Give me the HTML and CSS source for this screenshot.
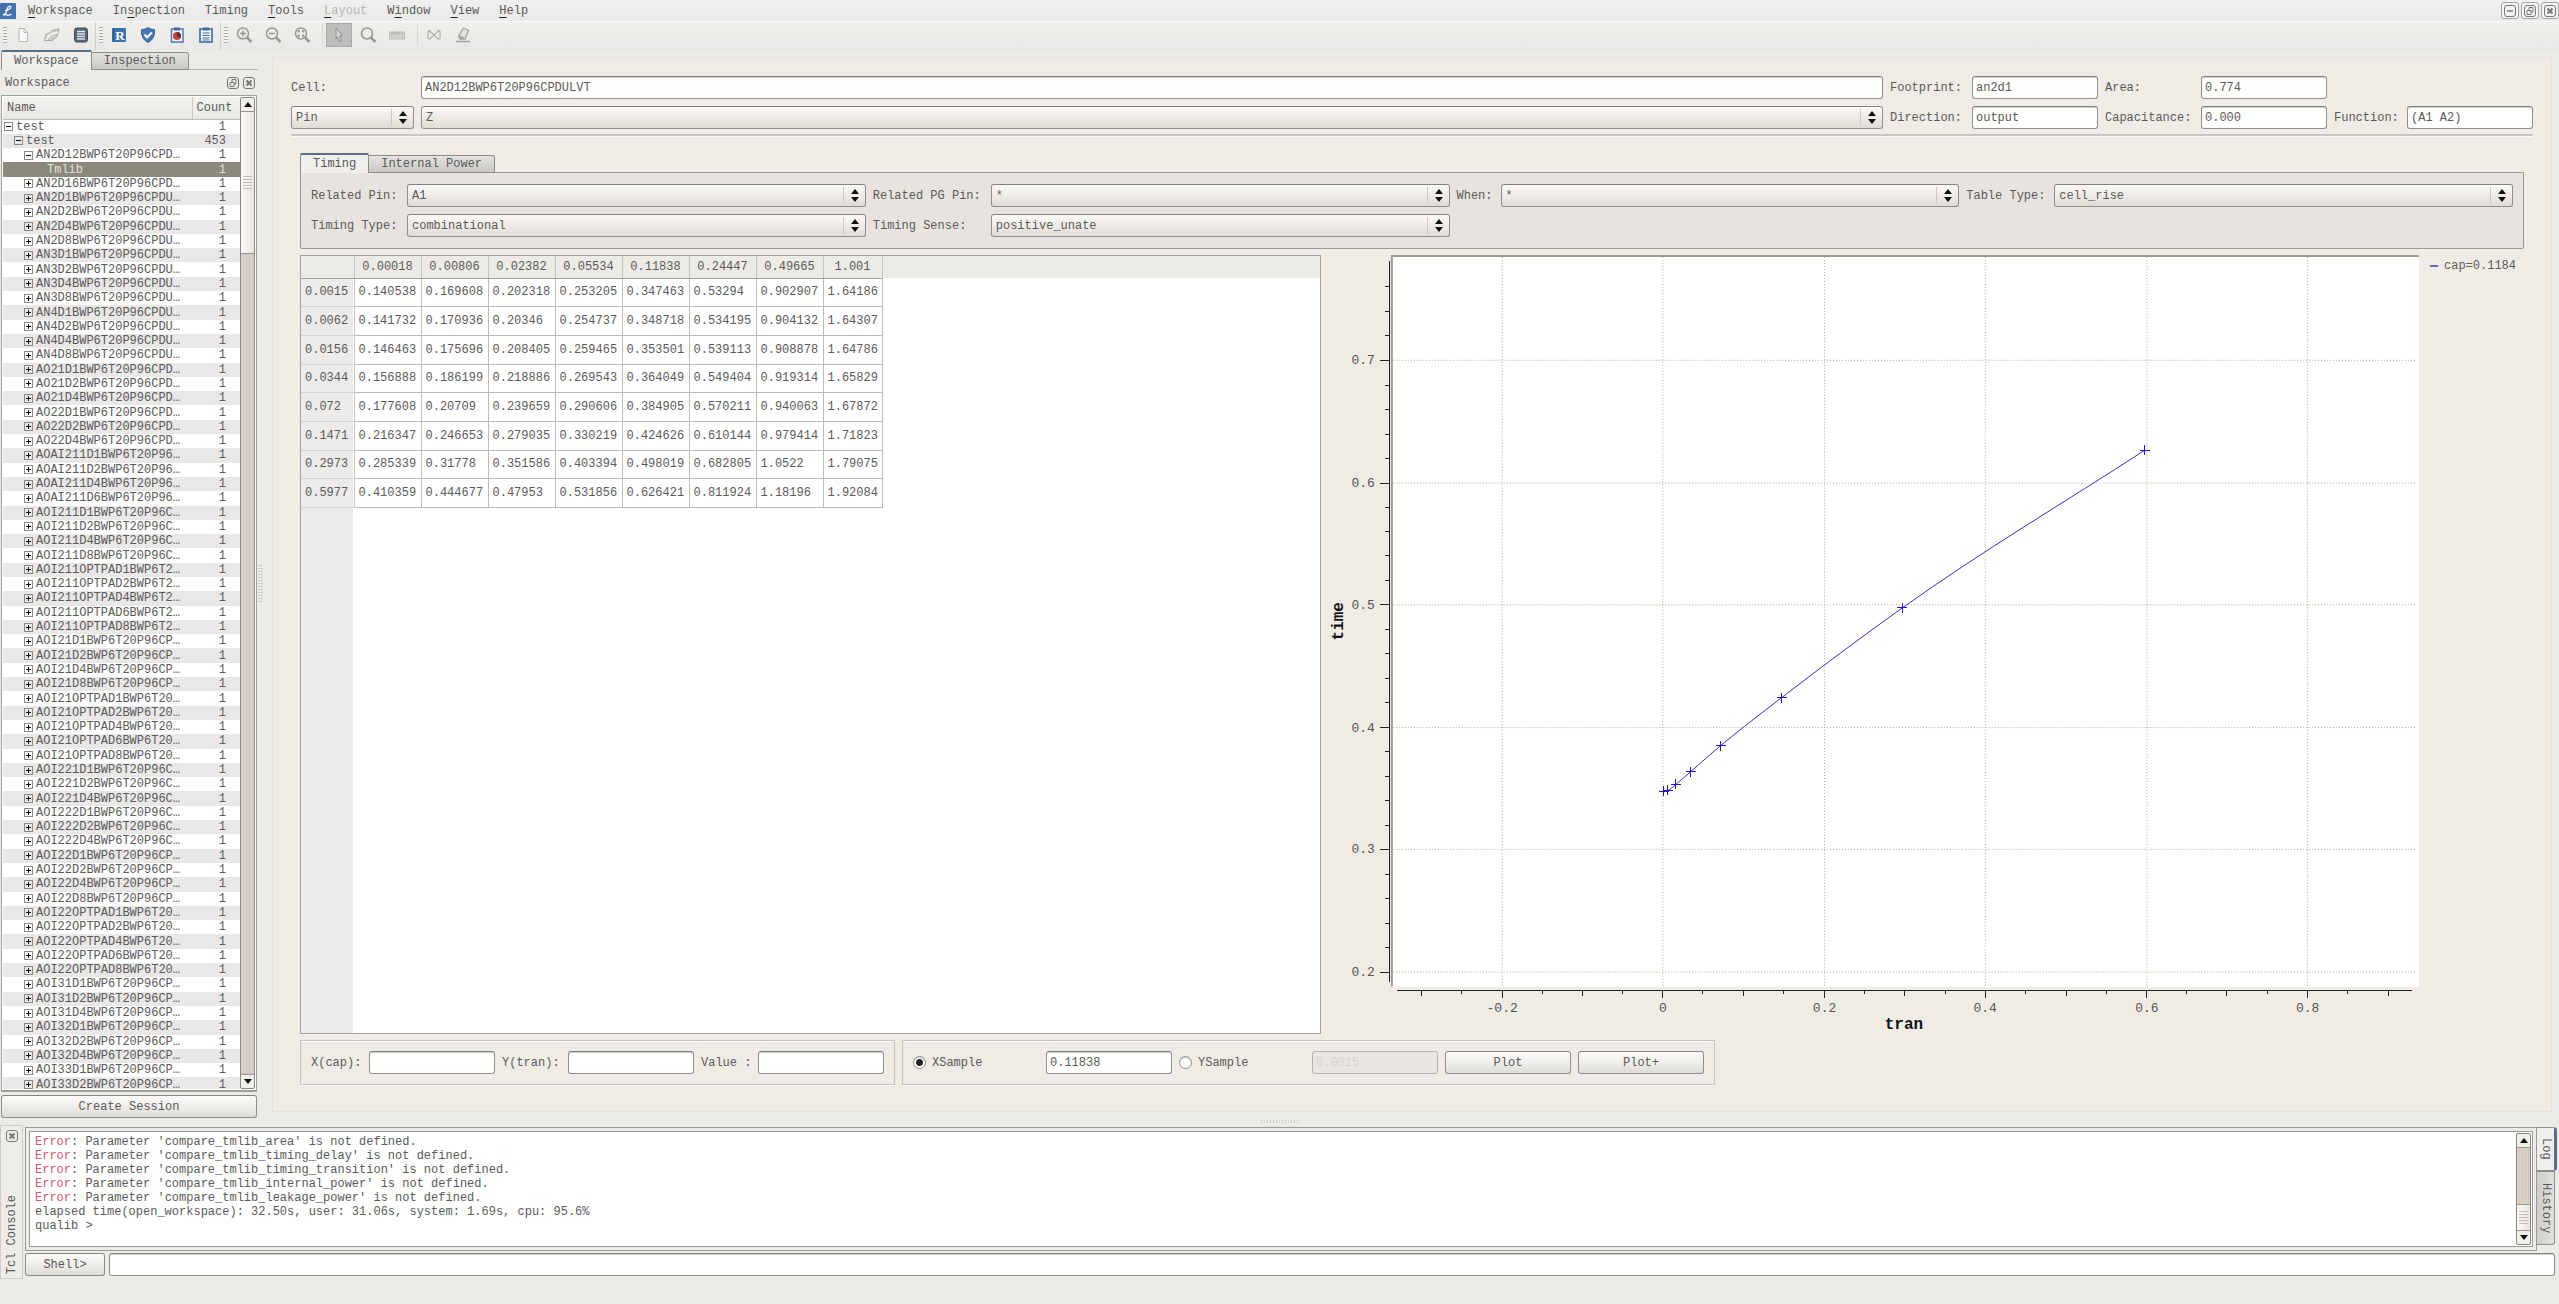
FILE: index.html
```html
<!DOCTYPE html>
<html lang="en">
<head>
<meta charset="utf-8">
<title>Workspace</title>
<link rel="stylesheet" href="styles.css">
</head>
<body>
<header class="menubar">
  <span class="logo"><svg width="16" height="16" viewBox="0 0 16 16"><rect width="16" height="16" rx="1" fill="#4273ae"/><path d="M11 4.500C11 2.500 8.500 2.500 7.500 5C6.700 7.500 6.500 10 4.500 12C3 12.500 3.500 10.500 5 11.200C7 12 8.500 13.500 11.500 11M5 7.500C7 7.500 9.500 6.500 11 4.500" fill="none" stroke="#fff" stroke-width="1.200"/></svg></span>
  <nav class="menus">
    <button><u>W</u>orkspace</button><button>In<u>s</u>pection</button><button>Timing</button><button><u>T</u>ools</button><button disabled><u>L</u>ayout</button><button>W<u>i</u>ndow</button><button><u>V</u>iew</button><button><u>H</u>elp</button>
  </nav>
  <div class="wincontrols">
    <button aria-label="Minimize"><svg width="12" height="12" viewBox="0 0 12 12"><rect x=".5" y=".5" width="11" height="11" rx="2.500"/><path d="M3 6h6" stroke-width="1.500"/></svg></button>
    <button aria-label="Restore"><svg width="12" height="12" viewBox="0 0 12 12"><rect x=".5" y=".5" width="11" height="11" rx="2.500"/><path d="M3 5.500h4v4h-4zM5 5.500v-3h4v4.500h-2"/></svg></button>
    <button aria-label="Close"><svg width="12" height="12" viewBox="0 0 12 12"><rect x=".5" y=".5" width="11" height="11" rx="2.500"/><path d="M3.500 3.500l5 5M8.500 3.500l-5 5" stroke-width="2"/></svg></button>
  </div>
</header>

<div class="toolbar">
  <div class="tools">
    <i class="grip"></i>
    <button aria-label="New"><svg viewBox="0 0 18 18"><path d="M5 2.500h5l3.500 4v9H5z" fill="#fbfbfa" stroke="#b4b3b0"/><path d="M10 2.500v4h3.500" fill="none" stroke="#b4b3b0"/></svg></button>
    <button aria-label="Open"><svg viewBox="0 0 18 18"><path d="M1.500 14.500L3 8l4-1 2-2.500 7-1.500-2 7.500-5 4z" fill="#cfcecb" stroke="#a5a4a1"/><path d="M3 14l4-5.500 8-2.500" fill="none" stroke="#f6f6f4" stroke-width="1.500"/></svg></button>
    <button aria-label="Database"><svg viewBox="0 0 18 18"><rect x="2.500" y="2" width="13" height="14" rx="2.500" fill="#5b6676" stroke="#3f4753"/><path d="M5 5.500h8M5 8h8M5 10.500h8M5 13h8" stroke="#dfe4ea" stroke-width="1.300"/></svg></button>
  </div>
  <div class="tools">
    <i class="grip"></i>
    <button aria-label="Report"><svg viewBox="0 0 18 18"><rect x="2" y="2" width="14" height="14" rx="1" fill="#3f72b0"/><path d="M3.500 2v14" stroke="#274e80"/><text x="10" y="14" text-anchor="middle" class="glyph">R</text></svg></button>
    <button aria-label="Check"><svg viewBox="0 0 18 18"><path d="M9 1.500c2 1.500 4 2 6.500 2 .5 6-1.500 10.500-6.500 13-5-2.500-7-7-6.500-13 2.500 0 4.500-.5 6.500-2z" fill="#4878b4" stroke="#365f94"/><path d="M5.500 8.500L8 11.500l5-5" fill="none" stroke="#fff" stroke-width="2"/></svg></button>
    <button aria-label="Chart"><svg viewBox="0 0 18 18"><rect x="3.500" y="3" width="11.500" height="13" fill="#f4f6fa" stroke="#4e79b0" stroke-width="1.500"/><rect x="6" y="1.500" width="6" height="3" fill="#3c6aa4"/><circle cx="9" cy="10" r="4" fill="#c34238"/><path d="M9 10V6a4 4 0 0 1 3.500 6z" fill="#5a3436"/></svg></button>
    <button aria-label="List"><svg viewBox="0 0 18 18"><rect x="3" y="3" width="12" height="13" fill="#f4f6fa" stroke="#3f72b0" stroke-width="1.700"/><rect x="6" y="1.500" width="6" height="3" fill="#3c6aa4"/><path d="M5.500 7h7M5.500 9.500h7M5.500 12h7M5.500 14h7" stroke="#4a6a94"/></svg></button>
  </div>
  <div class="tools">
    <i class="grip"></i>
    <button aria-label="Zoom in"><svg viewBox="0 0 18 18" class="lens"><circle cx="8" cy="7.500" r="5.500"/><path d="M12 11.500l4.500 4.500" stroke-width="2.500"/><path d="M5 7.500h6M8 4.500v6"/></svg></button>
    <button aria-label="Zoom out"><svg viewBox="0 0 18 18" class="lens"><circle cx="8" cy="7.500" r="5.500"/><path d="M12 11.500l4.500 4.500" stroke-width="2.500"/><path d="M5 7.500h6"/></svg></button>
    <button aria-label="Fit"><svg viewBox="0 0 18 18" class="lens"><circle cx="8" cy="7.500" r="5.500"/><path d="M12 11.500l4.500 4.500" stroke-width="2.500"/><path d="M5.500 6.500V5H7M9 5h1.500v1.500M10.500 8.500V10H9M7 10H5.500V8.500"/></svg></button>
    <i class="sep"></i>
    <button aria-label="Select" class="pressed"><svg viewBox="0 0 18 18"><path d="M6 2l6.500 8H9.500l2 5-2 .8-2-5L6 13z" fill="#d6d6d6" stroke="#8f8f8d"/></svg></button>
    <button aria-label="Search"><svg viewBox="0 0 18 18" class="lens"><circle cx="8" cy="7.500" r="5.500"/><path d="M12 11.500l4.500 4.500" stroke-width="2.500"/></svg></button>
    <button aria-label="Ruler"><svg viewBox="0 0 18 18"><rect x="1.500" y="6" width="15" height="7" fill="#cfcfcd" stroke="#bdbdba"/><path d="M4 6v3M6.500 6v2M9 6v3M11.500 6v2M14 6v3" stroke="#aaa"/></svg></button>
    <i class="sep"></i>
    <button aria-label="Measure"><svg viewBox="0 0 18 18" fill="none" stroke="#b0afac" stroke-width="1.200"><path d="M3 5v8M15 5v8M4 13.500L14 4.500M4 4.500L14 13.500"/><path d="M5.500 4.500H4V6M12.500 4.500H14V6"/></svg></button>
    <button aria-label="Clear"><svg viewBox="0 0 18 18"><path d="M6 13L4.500 10 9.500 2l5 2.500-3.500 8.500z" fill="#e4e3e1" stroke="#a3a29f" stroke-width="1.300"/><path d="M5 10l5.500 2.500M2 15.500h14" stroke="#a3a29f" stroke-width="1.500"/></svg></button>
  </div>
</div>

<main class="work">
  <aside class="dock">
    <div class="tabs"><button class="tab on">Workspace</button><button class="tab">Inspection</button></div>
    <div class="docktitle"><span>Workspace</span>
      <button class="mini" aria-label="Float"><svg width="12" height="12" viewBox="0 0 12 12"><rect x=".5" y=".5" width="11" height="11" rx="2.500"/><path d="M3 5.500h4v4h-4zM5 5.500v-3h4v4.500h-2"/></svg></button>
      <button class="mini" aria-label="Close"><svg width="12" height="12" viewBox="0 0 12 12"><rect x=".5" y=".5" width="11" height="11" rx="2.500"/><path d="M3.500 3.500l5 5M8.500 3.500l-5 5" stroke-width="2"/></svg></button>
    </div>
    <div class="treeframe">
      <div class="treeview">
        <table class="tree">
          <thead><tr><th>Name</th><th class="count">Count</th></tr></thead>
          <tbody id="cells"></tbody>
        </table>
      </div>
      <div class="scroll"><button class="up" aria-label="Up"></button><div class="thumb treethumb"></div><div class="trough"></div><button class="down" aria-label="Down"></button></div>
    </div>
    <button class="btn session">Create Session</button>
  </aside>
  <div class="vsplit"><i></i></div>

  <section class="panel">
    <div class="cellform">
      <label for="cell">Cell:</label>
      <input id="cell" value="AN2D12BWP6T20P96CPDULVT">
      <label for="foot">Footprint:</label><input id="foot" value="an2d1">
      <label for="area">Area:</label><input id="area" value="0.774">
      <span></span><span></span>
      <select aria-label="Object"><option>Pin</option></select>
      <select aria-label="Pin name"><option>Z</option></select>
      <label for="dir">Direction:</label><input id="dir" value="output">
      <label for="capac">Capacitance:</label><input id="capac" value="0.000">
      <label for="func">Function:</label><input id="func" value="(A1 A2)">
    </div>
    <hr>
    <div class="analysis">
      <div class="tabs"><button class="tab on">Timing</button><button class="tab">Internal Power</button></div>
      <div class="filters">
        <label for="rp">Related Pin:</label><select id="rp"><option>A1</option></select>
        <label for="pg">Related PG Pin:</label><select id="pg"><option>*</option></select>
        <label for="wh">When:</label><select id="wh"><option>*</option></select>
        <label for="tt">Table Type:</label><select id="tt"><option>cell_rise</option></select>
        <label for="ty">Timing Type:</label><select id="ty"><option>combinational</option></select>
        <label for="ts">Timing Sense:</label><select id="ts"><option>positive_unate</option></select>
      </div>
      <div class="views">
        <div class="sheet"><table class="lut"><thead><tr id="caps"></tr></thead><tbody id="values"></tbody></table></div>
        <div class="plot">
          <svg id="chart" viewBox="0 0 1100 780" preserveAspectRatio="xMinYMin meet" role="img" aria-label="time against tran"></svg>
          <div class="legend"><i></i>cap=0.1184</div>
        </div>
      </div>
      <div class="queries">
        <div class="group">
          <label for="xc">X(cap):</label><input id="xc">
          <label for="yt">Y(tran):</label><input id="yt">
          <label for="va">Value :</label><input id="va">
        </div>
        <div class="group">
          <label class="pick"><input type="radio" name="sample" checked>XSample</label><input aria-label="X sample value" value="0.11838">
          <label class="pick"><input type="radio" name="sample">YSample</label><input aria-label="Y sample value" value="0.0015" disabled>
          <button class="btn">Plot</button><button class="btn">Plot+</button>
        </div>
      </div>
    </div>
  </section>
</main>

<div class="hsplit"><i></i></div>

<footer class="console">
  <div class="side"><button class="mini" aria-label="Close"><svg width="12" height="12" viewBox="0 0 12 12"><rect x=".5" y=".5" width="11" height="11" rx="2.500"/><path d="M3.500 3.500l5 5M8.500 3.500l-5 5" stroke-width="2"/></svg></button><span>Tcl Console</span></div>
  <div class="shell">
    <div class="logrow">
      <div class="logframe"><div class="log">
<pre><b>Error</b>: Parameter 'compare_tmlib_area' is not defined.
<b>Error</b>: Parameter 'compare_tmlib_timing_delay' is not defined.
<b>Error</b>: Parameter 'compare_tmlib_timing_transition' is not defined.
<b>Error</b>: Parameter 'compare_tmlib_internal_power' is not defined.
<b>Error</b>: Parameter 'compare_tmlib_leakage_power' is not defined.
elapsed time(open_workspace): 32.50s, user: 31.06s, system: 1.69s, cpu: 95.6%
qualib &gt;</pre>
        <div class="scroll"><button class="up" aria-label="Up"></button><div class="trough"></div><div class="thumb logthumb"></div><button class="down" aria-label="Down"></button></div>
      </div></div>
      <div class="sidetabs"><button class="on">Log</button><button>History</button></div>
    </div>
    <div class="prompt"><button class="btn">Shell&gt;</button><input aria-label="Command"></div>
  </div>
</footer>
<script src="app.js"></script>
</body>
</html>
```
FILE: styles.css
```css
* { box-sizing: border-box; }
body, button, input, select, pre, table {
  font: 12px/14px "Liberation Mono", "Courier New", monospace;
  color: #5a5a5a;
}
body { margin: 0; height: 100vh; display: flex; flex-direction: column; background: #ecebe8; overflow: hidden; }
button { margin: 0; padding: 0; border: 0; background: none; }
svg { display: block; }

.menubar { display: flex; align-items: center; height: 22px; flex: none; background: linear-gradient(#f0f0ef, #e9e9e8); border-bottom: 1px solid #fafafa; }
.logo { width: 28px; }
.menus { display: flex; gap: 20px; flex: 1; }
.menus u { text-underline-offset: 3px; text-decoration-color: #222; }
.menus :disabled, .menus :disabled u { color: #b5b5b5; }
.wincontrols { display: flex; gap: 2px; }
.wincontrols button { width: 18px; height: 17px; border: 1px solid #a5a5a3; border-radius: 3px; display: grid; place-items: center; background: #f4f4f2; }
.wincontrols svg, .mini svg { fill: none; stroke: #777; }

.toolbar { display: flex; height: 28px; flex: none; background: linear-gradient(#f0efec, #e9e8e6); }
.tools { display: flex; align-items: center; gap: 3px; padding: 0 1px 2px 3px; border-right: 1px solid #d2d1ce; }
.tools:last-child { border: 0; }
.tools button { width: 26px; height: 24px; display: grid; place-items: center; }
.tools svg { width: 18px; height: 18px; }
.tools .pressed { background: #bdbdbb; border: 1px solid #aaa9a7; }
.grip { width: 4px; height: 16px; background: repeating-linear-gradient(#aaa9a6 0 1px, #f6f6f4 1px 3px); }
.sep { width: 1px; height: 22px; background: #d8d7d4; margin-left: 4px; }
.glyph { font: bold 13px "Liberation Serif", serif; fill: #fff; }
.lens { fill: none; stroke: #999894; stroke-width: 1.5; }

.work { flex: 1; min-height: 0; display: flex; }
.dock { width: 258px; padding-left: 1px; display: flex; flex-direction: column; }
.tabs { display: flex; align-items: flex-end; height: 20px; flex: none; position: relative; z-index: 1; margin-bottom: -1px; }
.tab { height: 18px; padding: 0 12px; border: 1px solid #8e8d8a; border-left-width: 0; border-radius: 0 3px 0 0; background: linear-gradient(#e4e3e0, #c9c8c4); }
.tab.on { height: 20px; border-left-width: 1px; border-top: 2px solid #5b6f85; border-bottom: 0; border-radius: 2px 2px 0 0; background: #f0efec; }
.docktitle { display: flex; align-items: center; gap: 4px; height: 26px; flex: none; padding: 0 3px 0 4px; border-top: 1px solid #b4b3b0; }
.docktitle span { flex: 1; }
.treeframe { flex: 1; min-height: 0; display: flex; border: 1px solid #a09f9c; border-width: 1px 1px 2px; padding: 1px; background: #fff; margin-right: 1px; }
.treeview { flex: 1; min-width: 0; height: 100%; overflow: hidden; }
.tree { width: 100%; height: calc(100% + 3px); border-collapse: collapse; table-layout: fixed; }
.tree th { height: 22px; padding: 0 0 0 4px; text-align: left; font-weight: normal; background: linear-gradient(#f3f2ef, #e9e8e5); border-bottom: 1px solid #bbbab7; }
.tree th.count { width: 48px; border-left: 1px solid #c9c8c5; }
.tree td { padding: 0; height: 14px; line-height: 14px; white-space: nowrap; }
.tree td + td { text-align: right; padding-right: 14px; }
.tree tr:nth-child(even) td { background: #e9e8e7; }
.tree tbody tr.sel td { background: #8a897b; color: #e2e1d8; }
.node { display: flex; align-items: center; gap: 3px; }
.l0 { padding-left: 1px; } .l1 { padding-left: 11px; } .l2 { padding-left: 21px; } .l3 { padding-left: 44px; }
.box { width: 9px; height: 9px; flex: none; border: 1px solid #8b8a87; background: linear-gradient(#111, #111) center / 5px 1px no-repeat; }
.box.plus { background: linear-gradient(#111, #111) center / 5px 1px no-repeat, linear-gradient(#111, #111) center / 1px 5px no-repeat; }
.session { margin: 3px 1px 0 0; flex: none; }

.scroll { width: 15px; flex: none; display: flex; flex-direction: column; border: 1px solid #8b8680; border-radius: 2px; background: #f1efea; }
.scroll button { height: 13px; flex: none; display: grid; place-items: center; }
.scroll button::before { content: ""; border: 4px solid transparent; }
.scroll .up::before { border-top: 0; border-bottom: 5px solid #111; }
.scroll .down::before { border-bottom: 0; border-top: 5px solid #111; }
.trough { flex: 1; background: repeating-linear-gradient(90deg, #d9d1c8 0 2px, #cfc6bd 2px 3px); border: 1px solid #9c958d; border-width: 1px 0; }
.thumb { flex: none; display: grid; place-items: center; background: linear-gradient(90deg, #fbfaf7, #e9e6df); border-top: 1px solid #9c958d; }
.thumb::before { content: ""; width: 9px; height: 13px; background: repeating-linear-gradient(#c4c0b8 0 1px, transparent 1px 3px); }
.treethumb { height: 142px; }
.logthumb { height: 26px; border-top: 0; border-bottom: 1px solid #9c958d; }

.vsplit { width: 14px; display: grid; place-items: center; padding-right: 9px; }
.vsplit i { width: 5px; height: 38px; background: repeating-linear-gradient(#cfcecb 0 1px, transparent 1px 3px); }
.hsplit { height: 7px; flex: none; display: grid; place-items: center; }
.hsplit i { width: 38px; height: 3px; background: repeating-linear-gradient(90deg, #cfcecb 0 1px, transparent 1px 3px); }

.panel { flex: 1; min-width: 0; margin: 7px 7px 6px 0; padding: 18px 18px 0 18px; border: 1px solid #e4e2dd; background: #efece6; display: flex; flex-direction: column; }
input, select, .btn { height: 23px; min-width: 0; border: 1px solid #8f8e8b; border-top-color: #848380; border-radius: 3px; }
input { width: 100%; padding: 0 3px; background: #fffffd; box-shadow: inset 0 1px #cfcecb; }
input:disabled { background: #e9e6e1; color: #d6d3ce; border-color: #b5b3af; box-shadow: none; }
select { width: 100%; padding: 0 22px 0 4px; appearance: none; background:
  url("data:image/svg+xml,%3Csvg xmlns='http://www.w3.org/2000/svg' width='22' height='21'%3E%3Cpath d='M.5 2v17' stroke='%23cccac5'/%3E%3Cpath d='M8 9l4-5 4 5zM8 12l4 5 4-5z' fill='%23111'/%3E%3C/svg%3E") right center no-repeat,
  linear-gradient(#fbf9f6, #efece7 50%, #dfdcd6); }
.btn { background: linear-gradient(#fcfbf9, #efeeeb 50%, #dedcd8); }
.cellform { display: grid; grid-template-columns: 123px minmax(0, 1fr) 75px 126px 89px 126px 66px 126px; gap: 7px; align-items: center; }
.cellform label { white-space: nowrap; }
hr { width: 100%; margin: 5px 0 0; border: 0; border-top: 2px solid #c9c6c1; border-bottom: 1px solid #fbfaf8; }
.analysis { flex: 1; min-height: 0; margin: 16px 9px 0 9px; display: flex; flex-direction: column; }
.filters { display: grid; grid-template-columns: 89px 1fr 111px 1fr 37px 1fr 81px 1fr; gap: 7px; align-items: center; padding: 11px 10px; border: 1px solid #999893; background: #e7e4df; border-radius: 0 0 2px 2px; }
.views { flex: 1; min-height: 0; display: flex; gap: 4px; margin-top: 6px; }
.sheet { flex: 1020 0 0; border: 1px solid #a3a29f; background: linear-gradient(#edebe6, #edebe6) top / 100% 22px no-repeat, linear-gradient(#ecebe9, #ecebe9) left / 52px 100% no-repeat, #fff; }
.lut { border-collapse: collapse; height: 252px; width: 581px; table-layout: fixed; }
.lut th { font-weight: normal; padding: 0; border-right: 1px solid #c5c4c0; }
.lut thead th { height: 22px; border-bottom: 1px solid #a3a29f; width: 67px; }
.lut thead th:first-child { width: 53px; }
.lut thead th:last-child { width: 59px; }
.lut tbody th { text-align: left; padding-left: 4px; border-bottom: 1px solid #d3d2cf; }
.lut td { padding: 0 0 0 4px; border: 1px solid #bcbbb8; background: #fff; }
.plot { flex: 1200 0 0; min-width: 0; display: flex; align-items: flex-start; }
.plot svg { flex: 1100 0 0; min-width: 0; overflow: visible; }
.legend { width: 101px; flex: none; display: flex; align-items: center; gap: 6px; padding: 4px 0 0 7px; }
.legend i { width: 8px; height: 2px; background: #6a64cc; }
.frame { fill: #fffffd; }
.edge { stroke: #9c9b96; stroke-width: 2; }
.grid { stroke: #a9a7a3; stroke-dasharray: 1 2; }
.axis { stroke: #222; stroke-width: 1; fill: none; shape-rendering: crispEdges; }
.curve { stroke: #3a2fc4; fill: none; }
.mark { stroke: #2416c8; fill: none; shape-rendering: crispEdges; }
.tick { font-size: 13px; fill: #555; }
.title { font-size: 16px; font-weight: bold; fill: #111; }

.queries { display: flex; gap: 7px; margin: 6px 0 26px; }
.group { display: flex; align-items: center; gap: 7px; height: 45px; padding: 0 10px; border: 1px solid #c5c3be; box-shadow: inset 0 1px #fbfaf8, 0 1px #fbfaf8; }
.group > input { width: 126px; }
.group > .btn { width: 126px; }
.group > label { white-space: nowrap; }
.group > label[for="xc"] { width: 51px; }
.group > label[for="yt"] { width: 59px; }
.group > label[for="va"] { width: 50px; }
.pick { display: flex; align-items: center; gap: 6px; width: 126px; }
.pick input { appearance: none; width: 13px; height: 13px; margin: 0; padding: 0; border-radius: 50%; border-color: #8d8c89; }
.pick input:checked { background: radial-gradient(#222 3px, #fff 4px); }

.console { display: flex; gap: 2px; height: 154px; flex: none; margin-bottom: 25px; padding-right: 4px; }
.side { width: 23px; display: flex; flex-direction: column; justify-content: space-between; align-items: center; padding: 4px 0; border: 1px solid #cfcdc8; background: #eeece7; }
.side span { writing-mode: vertical-rl; transform: rotate(180deg); }
.shell { flex: 1; min-width: 0; padding-top: 2px; display: flex; flex-direction: column; gap: 2px; }
.logrow { display: flex; height: 124px; }
.logframe { flex: 1; min-width: 0; padding: 3px; border: 1px solid #9a9996; }
.log { height: 100%; display: flex; border: 1px solid #9a9996; background: #fff; padding: 1px; }
pre { flex: 1; margin: 0; padding: 2px 4px; }
pre b { font-weight: normal; color: #d8566c; }
.sidetabs { width: 18px; display: flex; flex-direction: column; }
.sidetabs button { writing-mode: vertical-rl; width: 18px; height: 74px; border: 1px solid #8e8d8a; border-left: 0; border-radius: 0 0 3px 0; background: linear-gradient(90deg, #cfcecb, #e2e1de); }
.sidetabs .on { width: 20px; height: 44px; border-right: 3px solid #5b6f85; border-radius: 0 3px 3px 0; background: #f0efec; }
.prompt { display: flex; gap: 4px; }
.prompt .btn { width: 80px; }
.prompt input { flex: 1; }
```
FILE: app.js
```js
const suffix = 'BWP6T20P96CPDULVT';
const families = [
  ['AN2D', [16, 1, 2, 4, 8]], ['AN3D', [1, 2, 4, 8]], ['AN4D', [1, 2, 4, 8]],
  ['AO21D', [1, 2, 4]], ['AO22D', [1, 2, 4]], ['AOAI211D', [1, 2, 4, 6]],
  ['AOI211D', [1, 2, 4, 8]], ['AOI211OPTPAD', [1, 2, 4, 6, 8]],
  ['AOI21D', [1, 2, 4, 8]], ['AOI21OPTPAD', [1, 2, 4, 6, 8]],
  ['AOI221D', [1, 2, 4]], ['AOI222D', [1, 2, 4]], ['AOI22D', [1, 2, 4, 8]],
  ['AOI22OPTPAD', [1, 2, 4, 6, 8]], ['AOI31D', [1, 2, 4]], ['AOI32D', [1, 2, 4]],
  ['AOI33D', [1, 2]]
];
const elide = name => name.slice(0, 19) + '…';
const rows = [[0, 'test', 1, ''], [1, 'test', 453, ''], [2, elide('AN2D12' + suffix), 1, ''], [3, 'Tmlib', 1, null]];
families.forEach(([base, sizes]) => sizes.forEach(n => rows.push([2, elide(base + n + suffix), 1, 'plus'])));
document.getElementById('cells').innerHTML = rows.map(([level, name, count, box]) =>
  `<tr${box === null ? ' class="sel"' : ''}><td><div class="node l${level}">${box === null ? '' : `<i class="box ${box}"></i>`}<span>${name}</span></div></td><td>${count}</td></tr>`).join('');

const caps = ['0.00018', '0.00806', '0.02382', '0.05534', '0.11838', '0.24447', '0.49665', '1.001'];
const table = {
  '0.0015': '0.140538 0.169608 0.202318 0.253205 0.347463 0.53294 0.902907 1.64186',
  '0.0062': '0.141732 0.170936 0.20346 0.254737 0.348718 0.534195 0.904132 1.64307',
  '0.0156': '0.146463 0.175696 0.208405 0.259465 0.353501 0.539113 0.908878 1.64786',
  '0.0344': '0.156888 0.186199 0.218886 0.269543 0.364049 0.549404 0.919314 1.65829',
  '0.072': '0.177608 0.20709 0.239659 0.290606 0.384905 0.570211 0.940063 1.67872',
  '0.1471': '0.216347 0.246653 0.279035 0.330219 0.424626 0.610144 0.979414 1.71823',
  '0.2973': '0.285339 0.31778 0.351586 0.403394 0.498019 0.682805 1.0522 1.79075',
  '0.5977': '0.410359 0.444677 0.47953 0.531856 0.626421 0.811924 1.18196 1.92084'
};
document.getElementById('caps').innerHTML = '<th></th>' + caps.map(c => `<th>${c}</th>`).join('');
document.getElementById('values').innerHTML = Object.entries(table).map(([tran, line]) =>
  `<tr><th>${tran}</th>${line.split(' ').map(v => `<td>${v}</td>`).join('')}</tr>`).join('');

const X = t => 338 + 807.5 * t;
const Y = v => Math.round(718 - 1226 * (v - 0.2)) + 0.5;
let out = '<rect class="frame" x="66" y="0" width="1030" height="733"/><path class="edge" d="M66 1H1096M67 0V733"/>';
for (const t of [-0.2, 0, 0.2, 0.4, 0.6, 0.8]) {
  const x = Math.round(X(t)) + 0.5;
  out += `<path class="grid" d="M${x} 2V733"/><path class="axis" d="M${x} 737v7"/><text class="tick" x="${x}" y="758" text-anchor="middle">${t}</text>`;
}
for (let i = -6; i <= 18; i++) {
  if (i % 4 === 0) continue;
  out += `<path class="axis" d="M${Math.round(X(i / 20)) + 0.5} 737v${i % 2 ? 3 : 5}"/>`;
}
for (const v of [0.2, 0.3, 0.4, 0.5, 0.6, 0.7])
  out += `<path class="grid" d="M68 ${Y(v)}H1094"/><path class="axis" d="M55 ${Y(v)}h9"/><text class="tick" x="50" y="${Y(v) + 4}" text-anchor="end">${v}</text>`;
for (let i = 10; i <= 38; i++) if (i % 5) out += `<path class="axis" d="M60 ${Y(i / 50)}h4"/>`;
out += '<path class="axis" d="M64.5 6V728M72 736.500H1089"/>';
const points = Object.entries(table).map(([t, line]) => [Math.round(X(+t)) + 0.5, Y(+line.split(' ')[4])]);

// Smooth the curve with tangents weighted by the spacing of the samples.
const chord = i => (points[i + 1][1] - points[i][1]) / (points[i + 1][0] - points[i][0]);
const last = points.length - 1;
const slope = points.map((p, i) => {
  if (i === 0) return chord(0);
  if (i === last) return chord(last - 1);
  const a = p[0] - points[i - 1][0], b = points[i + 1][0] - p[0];
  return (chord(i - 1) * b + chord(i) * a) / (a + b);
});
let curve = `M${points[0]}`;
for (let i = 0; i < last; i++) {
  const [x0, y0] = points[i], [x1, y1] = points[i + 1], h = (x1 - x0) / 3;
  curve += `C${x0 + h} ${y0 + h * slope[i]} ${x1 - h} ${y1 - h * slope[i + 1]} ${x1} ${y1}`;
}
out += `<path class="curve" d="${curve}"/>`;
points.forEach(([x, y]) => { out += `<path class="mark" d="M${x - 5} ${y}h10M${x} ${y - 5}v10"/>`; });
out += '<text class="title" x="580" y="775" text-anchor="middle">tran</text><text class="title" transform="translate(18 367) rotate(-90)" text-anchor="middle">time</text>';
document.getElementById('chart').innerHTML = out;
```
